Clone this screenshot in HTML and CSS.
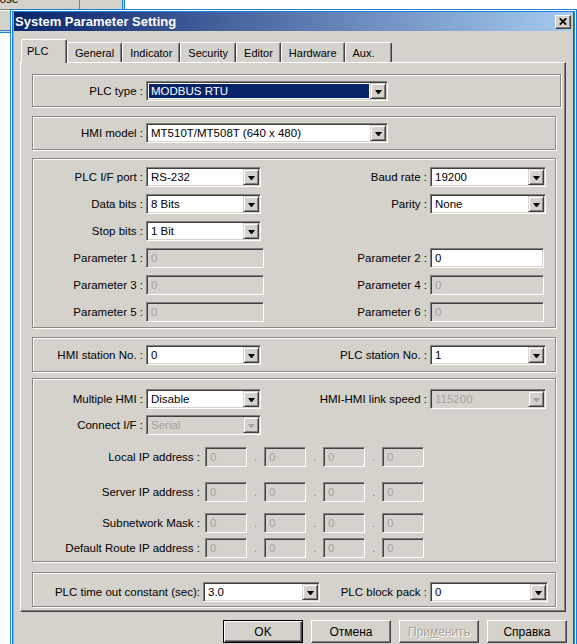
FILE: index.html
```html
<!DOCTYPE html>
<html lang="en">
<head>
<meta charset="utf-8">
<title>System Parameter Setting</title>
<link rel="stylesheet" href="styles.css">
</head>
<body>
<div class="desktop">
  <div class="back-window">
    <div class="back-strip">
      <div class="back-cell back-cell-text"><span class="back-label">Close</span></div>
      <div class="back-cell"></div>
    </div>
  </div>

  <div class="dialog-frame">
    <div class="dialog">
      <div class="titlebar">
        <span class="title">System Parameter Setting</span>
        <span class="close-btn">
          <svg width="8" height="7" viewBox="0 0 8 7"><path d="M0.8 0.3l6.4 6.4M7.2 0.3l-6.4 6.4" stroke="#000" stroke-width="1.7" fill="none"/></svg>
        </span>
      </div>

      <div class="dialog-body">
        <div class="tabs">
          <div class="tab tab-active">PLC</div>
          <div class="tab">General</div>
          <div class="tab">Indicator</div>
          <div class="tab">Security</div>
          <div class="tab">Editor</div>
          <div class="tab">Hardware</div>
          <div class="tab tab-last">Aux.</div>
        </div>

        <div class="panel">
          <div class="group g-plc">
            <div class="row-wide">
              <span class="lbl">PLC type :</span>
              <div class="combo"><span class="value value-selected">MODBUS RTU</span><span class="drop"></span></div>
            </div>
          </div>

          <div class="group g-hmi">
            <div class="row-wide">
              <span class="lbl">HMI model :</span>
              <div class="combo"><span class="value">MT510T/MT508T (640 x 480)</span><span class="drop"></span></div>
            </div>
          </div>

          <div class="group g-comm">
            <div class="grid-4">
              <span class="lbl">PLC I/F port :</span>
              <div class="combo combo-l"><span class="value">RS-232</span><span class="drop"></span></div>
              <span class="lbl">Baud rate :</span>
              <div class="combo combo-r"><span class="value">19200</span><span class="drop"></span></div>

              <span class="lbl">Data bits :</span>
              <div class="combo combo-l"><span class="value">8 Bits</span><span class="drop"></span></div>
              <span class="lbl">Parity :</span>
              <div class="combo combo-r"><span class="value">None</span><span class="drop"></span></div>

              <span class="lbl">Stop bits :</span>
              <div class="combo combo-l"><span class="value">1 Bit</span><span class="drop"></span></div>
              <span></span>
              <span></span>

              <span class="lbl">Parameter 1 :</span>
              <div class="edit edit-l is-disabled"><span class="value">0</span></div>
              <span class="lbl">Parameter 2 :</span>
              <div class="edit edit-r"><span class="value">0</span></div>

              <span class="lbl">Parameter 3 :</span>
              <div class="edit edit-l is-disabled"><span class="value">0</span></div>
              <span class="lbl">Parameter 4 :</span>
              <div class="edit edit-r is-disabled"><span class="value">0</span></div>

              <span class="lbl">Parameter 5 :</span>
              <div class="edit edit-l is-disabled"><span class="value">0</span></div>
              <span class="lbl">Parameter 6 :</span>
              <div class="edit edit-r is-disabled"><span class="value">0</span></div>
            </div>
          </div>

          <div class="group g-station">
            <div class="grid-4">
              <span class="lbl">HMI station No. :</span>
              <div class="combo combo-l"><span class="value">0</span><span class="drop"></span></div>
              <span class="lbl">PLC station No. :</span>
              <div class="combo combo-r"><span class="value">1</span><span class="drop"></span></div>
            </div>
          </div>

          <div class="group g-multi">
            <div class="grid-4 grid-tight">
              <span class="lbl">Multiple HMI :</span>
              <div class="combo combo-l"><span class="value">Disable</span><span class="drop"></span></div>
              <span class="lbl">HMI-HMI link speed :</span>
              <div class="combo combo-r is-disabled"><span class="value">115200</span><span class="drop"></span></div>

              <span class="lbl">Connect I/F :</span>
              <div class="combo combo-l is-disabled"><span class="value">Serial</span><span class="drop"></span></div>
              <span></span>
              <span></span>
            </div>

            <div class="ip-row ip-local">
              <span class="lbl ip-lbl">Local IP address :</span>
              <div class="edit ip-box is-disabled"><span class="value">0</span></div>
              <span class="ip-dot">.</span>
              <div class="edit ip-box is-disabled"><span class="value">0</span></div>
              <span class="ip-dot">.</span>
              <div class="edit ip-box is-disabled"><span class="value">0</span></div>
              <span class="ip-dot">.</span>
              <div class="edit ip-box is-disabled"><span class="value">0</span></div>
            </div>

            <div class="ip-row ip-server">
              <span class="lbl ip-lbl">Server IP address :</span>
              <div class="edit ip-box is-disabled"><span class="value">0</span></div>
              <span class="ip-dot">.</span>
              <div class="edit ip-box is-disabled"><span class="value">0</span></div>
              <span class="ip-dot">.</span>
              <div class="edit ip-box is-disabled"><span class="value">0</span></div>
              <span class="ip-dot">.</span>
              <div class="edit ip-box is-disabled"><span class="value">0</span></div>
            </div>

            <div class="ip-row ip-subnet">
              <span class="lbl ip-lbl">Subnetwork Mask :</span>
              <div class="edit ip-box is-disabled"><span class="value">0</span></div>
              <span class="ip-dot">.</span>
              <div class="edit ip-box is-disabled"><span class="value">0</span></div>
              <span class="ip-dot">.</span>
              <div class="edit ip-box is-disabled"><span class="value">0</span></div>
              <span class="ip-dot">.</span>
              <div class="edit ip-box is-disabled"><span class="value">0</span></div>
            </div>

            <div class="ip-row ip-route">
              <span class="lbl ip-lbl">Default Route IP address :</span>
              <div class="edit ip-box is-disabled"><span class="value">0</span></div>
              <span class="ip-dot">.</span>
              <div class="edit ip-box is-disabled"><span class="value">0</span></div>
              <span class="ip-dot">.</span>
              <div class="edit ip-box is-disabled"><span class="value">0</span></div>
              <span class="ip-dot">.</span>
              <div class="edit ip-box is-disabled"><span class="value">0</span></div>
            </div>
          </div>

          <div class="group g-timeout">
            <div class="timeout-row">
              <span class="lbl">PLC time out constant (sec):</span>
              <div class="combo"><span class="value">3.0</span><span class="drop"></span></div>
              <span class="lbl">PLC block pack :</span>
              <div class="combo"><span class="value">0</span><span class="drop"></span></div>
            </div>
          </div>
        </div>

        <div class="buttons">
          <button class="btn btn-default" type="button">OK</button>
          <button class="btn" type="button">Отмена</button>
          <button class="btn is-disabled" type="button">При<u>м</u>енить</button>
          <button class="btn" type="button">Справка</button>
        </div>
      </div>
    </div>
  </div>
</div>
</body>
</html>
```

FILE: styles.css
```css
* { box-sizing: border-box; }

html, body { margin: 0; padding: 0; }

body {
  width: 577px;
  height: 644px;
  overflow: hidden;
  background: #fff;
  font-family: "Liberation Sans", Arial, sans-serif;
  font-size: 11.5px;
  color: #000;
}

.desktop {
  position: relative;
  width: 577px;
  height: 644px;
  overflow: hidden;
}

/* window left open behind the dialog */
.back-window {
  position: absolute;
  left: 0;
  top: -12px;
  width: 125px;
  height: 45px;
  background: #d5d2cc;
  border-right: 3px double #1a80d8;
  border-bottom: 3px double #1a80d8;
}

.back-strip {
  display: flex;
  height: 22px;
  border-bottom: 1px solid #808080;
  box-shadow: 0 1px 0 #fff;
}

.back-cell-text {
  width: 80px;
  border-right: 1px solid #808080;
  overflow: hidden;
  white-space: nowrap;
  padding-top: 4px;
  line-height: 14px;
}

.back-label {
  display: inline-block;
  margin-left: -11px;
}

/* dialog window */
.dialog-frame {
  position: absolute;
  left: 10px;
  top: 9px;
  width: 567px;
  height: 660px;
  border: 3px double #1a80d8;
  background: #fff;
}

.dialog {
  height: 100%;
  background: #d5d2cc;
  padding: 0 2px 0 1px;
  box-shadow: inset 1px 0 0 #a8a59f, inset -1px 0 0 #55534f;
}

.titlebar {
  height: 19px;
  display: flex;
  align-items: center;
  justify-content: space-between;
  padding: 0 1px;
  background: linear-gradient(to right, #0a246a 0%, #a6caf0 100%);
}

.title {
  color: #fff;
  font-weight: bold;
  font-size: 13px;
  line-height: 19px;
  white-space: nowrap;
}

.close-btn {
  width: 16px;
  height: 14px;
  display: flex;
  align-items: center;
  justify-content: center;
  background: #d5d2cc;
  border: 1px solid;
  border-color: #fff #404040 #404040 #fff;
  box-shadow: inset -1px -1px 0 #808080;
}

.dialog-body {
  padding: 8px 6px 0 6px;
}

/* tab strip */
.tabs {
  display: flex;
  align-items: flex-end;
  height: 23px;
  padding-left: 1px;
  font-size: 11px;
}

.tab {
  height: 20px;
  padding: 0 7px;
  display: flex;
  align-items: center;
  white-space: nowrap;
  border-top: 1px solid #fff;
  border-left: 1px solid #fff;
  border-right: 1px solid #404040;
  box-shadow: inset -1px 0 0 #808080;
  border-radius: 2px 2px 0 0;
}

.tab-active {
  height: 24px;
  width: 46px;
  padding: 0 0 2px 5px;
  margin-bottom: -1px;
  z-index: 1;
  background: #d5d2cc;
}

.tab-last {
  padding-right: 16px;
}

.panel {
  display: flex;
  flex-direction: column;
  border: 1px solid;
  border-color: #fff #404040 #404040 #fff;
  box-shadow: inset -1px -1px 0 #808080;
  padding: 0 9px 4px 11px;
}

/* etched group frames */
.group {
  border: 1px solid #8c8984;
  box-shadow: inset 1px 1px 0 #fff, 1px 1px 0 #fff;
}

.g-plc { margin-top: 11px; margin-right: -5px; padding: 6px 0 5px; }
.g-hmi { margin-top: 9px; padding: 6px 0 6px; }
.g-comm { margin-top: 8px; padding: 8px 0 5px; }
.g-station { margin-top: 9px; padding: 7px 0 6px; }
.g-multi { margin-top: 6px; padding: 10px 0 3px; }
.g-timeout { margin-top: 10px; padding: 9px 0 4px; }

.lbl {
  text-align: right;
  white-space: nowrap;
  line-height: 20px;
}

.row-wide {
  display: grid;
  grid-template-columns: 110px 242px;
  column-gap: 3px;
  align-items: center;
}

.grid-4 {
  display: grid;
  grid-template-columns: 110px 118px 160px 116px;
  grid-auto-rows: 20px;
  column-gap: 3px;
  row-gap: 7px;
  align-items: center;
}

.grid-tight { row-gap: 6px; }

.timeout-row {
  display: grid;
  grid-template-columns: 167px 117px 104px 118px;
  column-gap: 3px;
  align-items: center;
}

/* sunken controls */
.combo,
.edit {
  height: 20px;
  display: flex;
  align-items: stretch;
  padding: 1px;
  background: #fff;
  border: 1px solid;
  border-color: #808080 #fff #fff #808080;
  box-shadow: inset 1px 1px 0 #404040, inset -1px -1px 0 #d5d2cc;
  overflow: hidden;
}

.combo-l { width: 115px; }
.combo-r { width: 116px; }
.edit-l { width: 118px; }
.edit-r { width: 114px; }

.value {
  flex: 1;
  padding-left: 3px;
  line-height: 16px;
  white-space: nowrap;
  overflow: hidden;
}

.value-selected {
  margin: 1px 1px 1px 1px;
  padding-left: 2px;
  line-height: 14px;
  background: #0a246a;
  color: #fff;
}

.drop {
  flex: none;
  width: 16px;
  height: 16px;
  display: flex;
  align-items: center;
  justify-content: center;
  background: #d5d2cc;
  border: 1px solid;
  border-color: #d5d2cc #404040 #404040 #d5d2cc;
  box-shadow: inset 1px 1px 0 #fff, inset -1px -1px 0 #808080;
}

.drop::after {
  content: "";
  width: 1px;
  height: 0;
  margin-top: 1px;
  border-top: 4px solid #000;
  border-left: 3px solid transparent;
  border-right: 3px solid transparent;
}

.is-disabled.combo,
.is-disabled.edit {
  background: #d5d2cc;
}

.is-disabled .value {
  color: #a6a39d;
}

.is-disabled .drop::after {
  border-top-color: #a6a39d;
}

/* IP address rows */
.ip-row {
  display: flex;
  align-items: center;
  height: 20px;
}

.ip-local { margin-top: 12px; }
.ip-server { margin-top: 15px; }
.ip-subnet { margin-top: 11px; }
.ip-route { margin-top: 5px; }

.ip-lbl {
  width: 167px;
  margin-right: 5px;
}

.ip-box { width: 42px; }

.ip-dot {
  width: 17px;
  text-align: center;
  color: #8a8782;
  line-height: 20px;
}

/* command buttons */
.buttons {
  display: flex;
  justify-content: flex-end;
  gap: 8px;
  margin-top: 8px;
  margin-right: -1px;
}

.btn {
  width: 80px;
  height: 23px;
  padding: 0;
  font-family: "Liberation Sans", Arial, sans-serif;
  font-size: 12px;
  color: #000;
  background: #d5d2cc;
  border: 1px solid;
  border-color: #fff #404040 #404040 #fff;
  box-shadow: inset -1px -1px 0 #808080;
}

.btn-default {
  border-color: #000;
  box-shadow: inset 1px 1px 0 #fff, inset -1px -1px 0 #404040, inset -2px -2px 0 #808080;
}

.btn.is-disabled {
  color: #a6a39d;
  text-shadow: 1px 1px 0 #fff;
}

.btn u { text-decoration: underline; }
```
